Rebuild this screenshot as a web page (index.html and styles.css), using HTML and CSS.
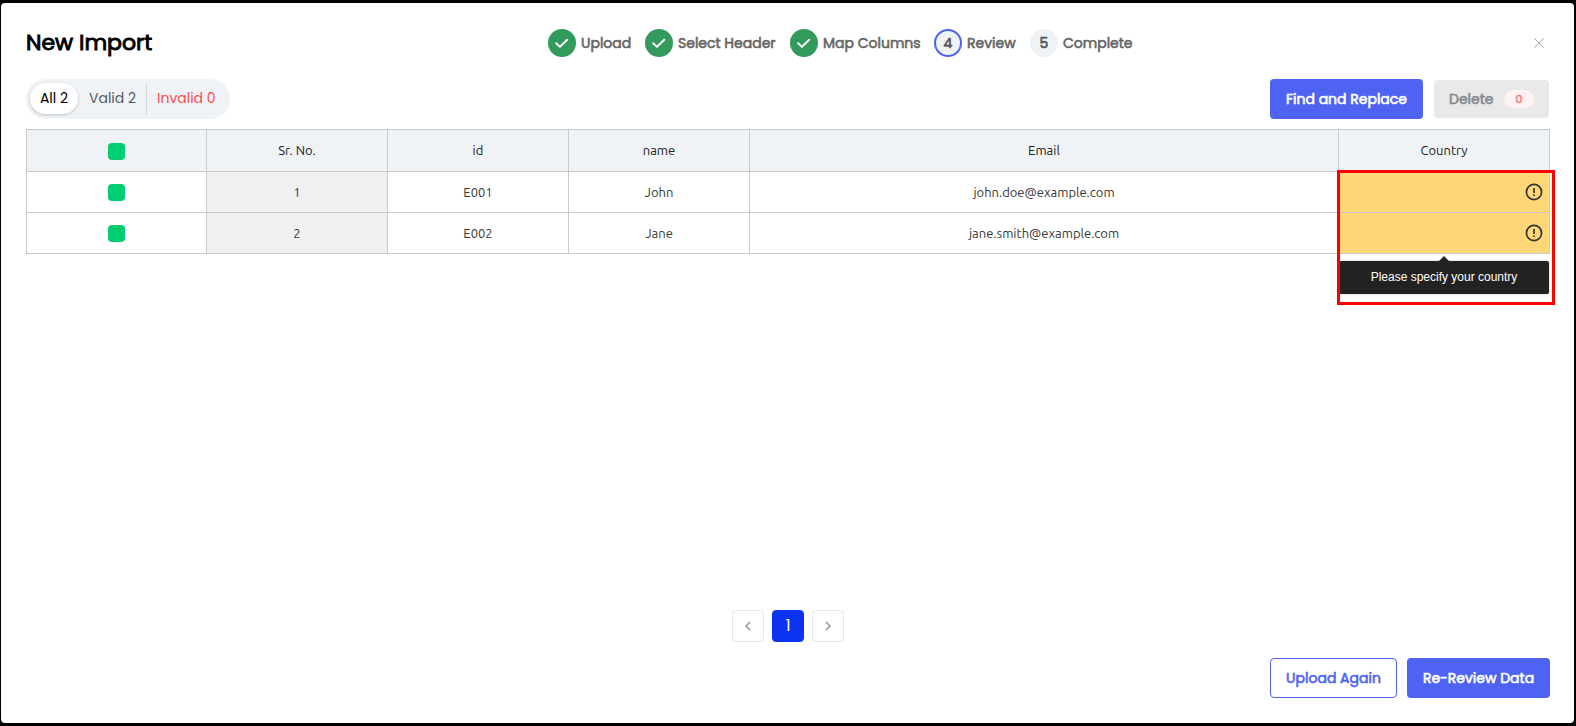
FILE: index.html
```html
<!DOCTYPE html>
<html lang="en">
<head>
<meta charset="utf-8">
<title>New Import</title>
<link rel="stylesheet" href="styles.css">
</head>
<body>
<main class="modal">
  <header class="header">
    <h1 class="title">New Import</h1>
    <ol class="steps">
      <li class="step"><span class="dot done"><svg width="28" height="28" viewBox="0 0 28 28"><path d="M8.2 14.3l3.7 3.6 7.3-7.2"/></svg></span><span class="label w-upload">Upload</span></li>
      <li class="step"><span class="dot done"><svg width="28" height="28" viewBox="0 0 28 28"><path d="M8.2 14.3l3.7 3.6 7.3-7.2"/></svg></span><span class="label w-select">Select Header</span></li>
      <li class="step"><span class="dot done"><svg width="28" height="28" viewBox="0 0 28 28"><path d="M8.2 14.3l3.7 3.6 7.3-7.2"/></svg></span><span class="label w-map">Map Columns</span></li>
      <li class="step"><span class="dot current">4</span><span class="label w-review">Review</span></li>
      <li class="step"><span class="dot">5</span><span class="label w-complete">Complete</span></li>
    </ol>
    <button class="close" aria-label="Close"><svg width="12" height="12" viewBox="0 0 12 12"><path d="M1.2 1.2l9.6 9.6M10.8 1.2l-9.6 9.6"/></svg></button>
  </header>

  <div class="toolbar">
    <div class="tabs">
      <span class="tab active">All 2</span>
      <span class="tab valid">Valid 2</span>
      <span class="tab invalid">Invalid 0</span>
    </div>
    <div class="actions">
      <button class="btn primary find">Find and Replace</button>
      <button class="btn delete" disabled>Delete <span class="badge">0</span></button>
    </div>
  </div>

  <section class="grid">
    <div class="cell head"><i class="check"></i></div>
    <div class="cell head">Sr. No.</div>
    <div class="cell head">id</div>
    <div class="cell head">name</div>
    <div class="cell head">Email</div>
    <div class="cell head">Country</div>

    <div class="cell"><i class="check"></i></div>
    <div class="cell serial">1</div>
    <div class="cell">E001</div>
    <div class="cell">John</div>
    <div class="cell">john.doe@example.com</div>
    <div class="cell warn"><svg width="18" height="18" viewBox="0 0 18 18"><circle cx="9" cy="9" r="7.6"/><path d="M9 5v4.9M9 11.5v1.6"/></svg></div>

    <div class="cell"><i class="check"></i></div>
    <div class="cell serial">2</div>
    <div class="cell">E002</div>
    <div class="cell">Jane</div>
    <div class="cell">jane.smith@example.com</div>
    <div class="cell warn"><svg width="18" height="18" viewBox="0 0 18 18"><circle cx="9" cy="9" r="7.6"/><path d="M9 5v4.9M9 11.5v1.6"/></svg></div>

    <div class="tooltip">Please specify your country</div>
    <div class="highlight"></div>
  </section>

  <nav class="pager">
    <button class="page" aria-label="Previous"><svg width="8" height="12" viewBox="0 0 8 12"><path d="M6 2L2 6l4 4"/></svg></button>
    <button class="page on">1</button>
    <button class="page" aria-label="Next"><svg width="8" height="12" viewBox="0 0 8 12"><path d="M2 2l4 4-4 4"/></svg></button>
  </nav>

  <footer class="footer">
    <button class="btn outline">Upload Again</button>
    <button class="btn primary review">Re-Review Data</button>
  </footer>
</main>
</body>
</html>
```

FILE: styles.css
```css
* { box-sizing: border-box; }
body {
  margin: 0;
  height: 726px;
  padding: 3px 2px 3px 1px;
  background: #000;
  font-family: Poppins, Inter, sans-serif;
  font-size: 14px;
  overflow: hidden;
}
button { font: inherit; margin: 0; padding: 0; border: 0; background: none; }
svg { display: block; fill: none; stroke: currentColor; }

.modal {
  height: 720px;
  padding: 26px 24px 25px 25px;
  background: #fff;
  border-radius: 4px;
  display: flex;
  flex-direction: column;
}

.header { display: flex; align-items: center; height: 28px; }
.title {
  margin: 0;
  width: 522px;
  font-size: 22px;
  line-height: 28px;
  font-weight: 400;
  -webkit-text-stroke: 0.9px;
  color: #000;
}
.steps { display: flex; gap: 14px; margin: 0; padding: 0; list-style: none; }
.step { display: flex; align-items: center; gap: 5px; }
.dot {
  width: 28px;
  height: 28px;
  border-radius: 50%;
  background: #eff3f6;
  color: #4f555b;
  line-height: 28px;
  text-align: center;
  -webkit-text-stroke: 0.6px;
}
.done { background: #329a5b; color: #fff; }
.done path { stroke-width: 2; stroke-linecap: round; stroke-linejoin: round; }
.current { border: 2px solid #4f63f2; line-height: 24px; }
.label { color: #666; white-space: nowrap; -webkit-text-stroke: 0.6px; }
.w-upload { width: 50px; }
.w-select { width: 98px; }
.w-map { width: 97px; }
.w-review { width: 49px; }
.w-complete { width: 70px; }
.close { margin: 0 5px 0 auto; color: #a0a8b0; }

.toolbar { display: flex; justify-content: space-between; margin-top: 22px; height: 40px; }
.tabs {
  display: flex;
  align-items: center;
  width: 204px;
  height: 40px;
  padding: 0 4px;
  border-radius: 20px;
  background: #eff3f6;
  color: #545c64;
  white-space: nowrap;
}
.tab { height: 32px; line-height: 31px; }
.active {
  width: 48px;
  height: 31px;
  line-height: 30px;
  margin-bottom: 1px;
  border-radius: 16px;
  background: #fff;
  color: #000;
  text-align: center;
  box-shadow: 0 1px 3px rgba(0, 0, 0, 0.2);
}
.valid { width: 69px; padding-left: 11px; border-right: 1px solid #d6dbdf; }
.invalid { padding-left: 10px; color: #ff4d4f; }

.actions { display: flex; align-items: center; gap: 11px; padding-right: 1px; }
.btn {
  height: 40px;
  border-radius: 4px;
  -webkit-text-stroke: 0.6px;
  text-align: center;
  white-space: nowrap;
}
.primary { background: #4f63f2; color: #fff; }
.find { width: 153px; }
.delete {
  display: flex;
  align-items: center;
  justify-content: space-between;
  width: 115px;
  height: 38px;
  padding: 0 15px;
  background: #e9e9e9;
  color: #868b90;
}
.badge {
  width: 30px;
  height: 18px;
  border-radius: 9px;
  background: #fff2f2;
  color: #ff6f70;
  font-size: 11px;
  line-height: 18px;
  -webkit-text-stroke: 0.4px;
}

.grid {
  position: relative;
  display: grid;
  grid-template-columns: 180px 181px 181px 181px 589px 211px;
  grid-template-rows: 42px 41px 41px;
  width: 1524px;
  margin-top: 10px;
  border: solid #c9cacb;
  border-width: 1px 0 0 1px;
  font: 13px Ubuntu, "Noto Sans", sans-serif;
  color: #373737;
}
.cell {
  display: flex;
  align-items: center;
  justify-content: center;
  padding-bottom: 1px;
  border: solid #c9cacb;
  border-width: 0 1px 1px 0;
}
.head { background: #eff3f6; color: #222; }
.serial { background: #f0f0f0; }
.check { width: 17px; height: 17px; margin-top: 2px; border-radius: 4px; background: #01ce71; }
.warn { justify-content: flex-end; padding: 0 6px 0 0; background: #ffd777; color: #333; }
.warn svg { stroke-width: 1.7; }

.tooltip {
  position: absolute;
  left: 1312px;
  top: 131px;
  width: 210px;
  height: 33px;
  border-radius: 2px;
  background: #222;
  color: #fff;
  font: 12px/32px "Liberation Sans", Arial, sans-serif;
  text-align: center;
  box-shadow: 0 0 2px rgba(0, 0, 0, 0.3);
}
.tooltip::before {
  content: "";
  position: absolute;
  left: 100px;
  top: -5px;
  border: solid transparent;
  border-width: 0 5px 5px;
  border-bottom-color: #222;
}
.highlight {
  position: absolute;
  left: 1310px;
  top: 40px;
  width: 218px;
  height: 135px;
  border: 3px solid #fe0000;
}

.pager { display: flex; justify-content: center; gap: 8px; margin: auto 0 16px; }
.page {
  display: flex;
  align-items: center;
  justify-content: center;
  width: 32px;
  height: 32px;
  border: 1px solid #e6eaed;
  border-radius: 4px;
  color: #8f8f8f;
}
.page path { stroke-width: 1.4; }
.on { border-color: #0b33f0; background: #0b33f0; color: #fff; font-size: 16px; padding-bottom: 2px; }

.footer { display: flex; justify-content: flex-end; gap: 10px; }
.outline { width: 127px; border: 1px solid #4f63f2; color: #4f63f2; }
.review { width: 143px; }
```
